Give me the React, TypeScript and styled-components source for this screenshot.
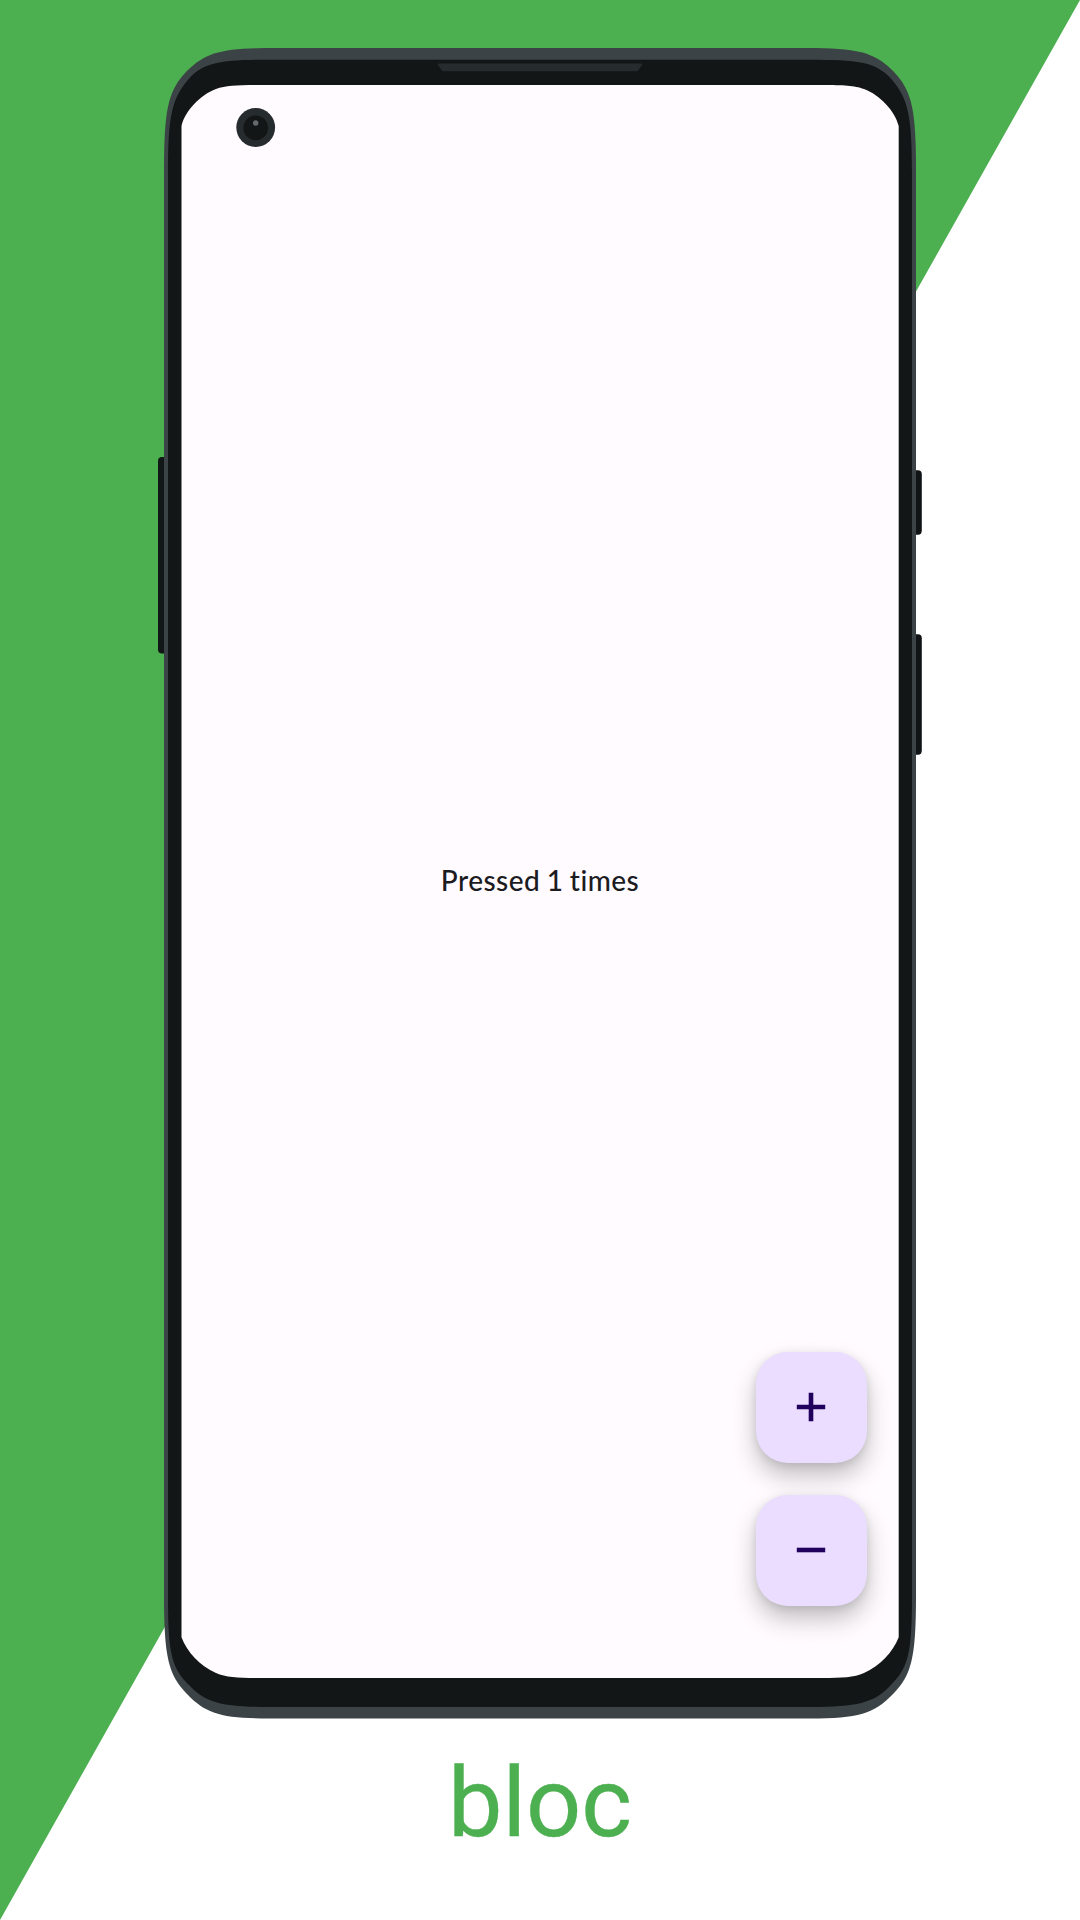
import React, { useState } from "react";
import styled, { createGlobalStyle } from "styled-components";

const GlobalStyle = createGlobalStyle`
  html, body { margin: 0; padding: 0; background: #ffffff; }
`;

const Page = styled.main`
  position: relative;
  isolation: isolate;
  box-sizing: border-box;
  width: 1080px;
  height: 1920px;
  padding-top: 48px;
  display: flex;
  flex-direction: column;
  align-items: center;
  overflow: hidden;
  background: #ffffff;
`;

const Backdrop = styled.div`
  position: absolute;
  inset: 0;
  z-index: -1;
  background: #4caf50;
  clip-path: polygon(0 0, 100% 0, 0 100%);
`;

const Phone = styled.section`
  position: relative;
  box-sizing: border-box;
  width: 764px;
  height: 1670.5px;
  padding: 37px 23.5px 40.5px;
  display: flex;
`;

const PhoneArt = styled.svg`
  position: absolute;
  inset: 0;
  width: 764px;
  height: 1670.5px;
`;

const Screen = styled.div`
  position: relative;
  flex: 1;
  display: grid;
  grid-template-rows: 1fr;
`;

const Message = styled.p`
  grid-area: 1 / 1;
  place-self: center;
  margin: 0 0 3px;
  font: 500 28px/40px Lato, "Noto Sans", sans-serif;
  letter-spacing: 0.45px;
  word-spacing: -1px;
  color: #1c1b1f;
`;

const Actions = styled.div`
  grid-area: 1 / 1;
  place-self: end;
  display: flex;
  flex-direction: column;
  gap: 31.5px;
  padding: 0 31.5px 72px 0;
`;

const Fab = styled.button`
  display: flex;
  align-items: center;
  justify-content: center;
  width: 111.5px;
  height: 111.5px;
  padding: 0;
  border: 0;
  border-radius: 32px;
  background: #eaddff;
  color: #21005d;
  box-shadow: 0 13px 24px rgba(0, 0, 0, 0.24), 0 2px 9px rgba(0, 0, 0, 0.1);
  cursor: pointer;
`;

const Glyph = styled.svg`
  width: 48px;
  height: 48px;
  fill: currentColor;
`;

const Title = styled.h1`
  margin: 28px 0 0;
  font: 400 97px/112px Roboto, sans-serif;
  color: #4caf50;
  -webkit-text-stroke: 0.4px #4caf50;
`;

const framePath =
  "M164 173C164 108 168 90 188 70C206 52 224 48 273 48H807C856 48 874 52 892 70C912 90 916 108 916 173V1595C916 1660 911 1675 893 1694C874 1714 858 1718.5 810 1718.5H270C222 1718.5 206 1714 187 1694C169 1675 164 1660 164 1595Z";
const bodyPath =
  "M168 175C168 113 172 98 190 77.5C205 62 222 59.7 271 59.7H809C858 59.7 875 62 890 77.5C908 98 912 113 912 175V1595C912 1656 908 1668 890 1686C874 1703 857 1707 810 1707H270C223 1707 206 1703 190 1686C172 1668 168 1656 168 1595Z";
const glassPath =
  "M181.5 126C185 111 200 95 216 89C226 85.5 236 85 258 85H822C844 85 854 85.5 864 89C880 95 895 111 898.7 126V1637.3C893 1652 880 1666 864 1673C854 1677.5 842 1678 822 1678H258C238 1678 226 1677.5 216 1673C200 1666 187 1652 181.5 1637.3Z";

function PhoneFrame() {
  return (
    <PhoneArt viewBox="158 48 764 1670.5" aria-hidden="true">
      <path d="M165 457H162Q158 457 158 461V649.5Q158 653.5 162 653.5H165Z" fill="#111616" />
      <path d="M915 470.3H918Q921.8 470.3 921.8 474.5V530.5Q921.8 534.7 918 534.7H915Z" fill="#111416" />
      <path d="M915 634.3H918Q921.8 634.3 921.8 638.5V750.5Q921.8 754.7 918 754.7H915Z" fill="#111416" />
      <path d={framePath} fill="#3c4346" />
      <path d={bodyPath} fill="#121617" />
      <path d="M437.5 64.5L439 63.5H641L642.5 64.5L637.5 71.3H442.5Z" fill="#262b2d" />
      <path d={glassPath} fill="#fffbff" />
      <circle cx="255.7" cy="127.5" r="19.4" fill="#262b2d" />
      <circle cx="255.7" cy="127.9" r="12.3" fill="#121617" />
      <circle cx="255.7" cy="123" r="2.7" fill="#656b6d" />
    </PhoneArt>
  );
}

export default function App() {
  const [count, setCount] = useState(1);
  return (
    <>
      <GlobalStyle />
      <Page>
        <Backdrop />
        <Phone>
          <PhoneFrame />
          <Screen>
            <Message>Pressed {count} times</Message>
            <Actions>
              <Fab aria-label="Increment" onClick={() => setCount(count + 1)}>
                <Glyph viewBox="0 0 24 24">
                  <path d="M19.1 13.15h-5.95v5.95h-2.3v-5.95H4.9v-2.3h5.95V4.9h2.3v5.95h5.95z" />
                </Glyph>
              </Fab>
              <Fab aria-label="Decrement" onClick={() => setCount(count - 1)}>
                <Glyph viewBox="0 0 24 24">
                  <path d="M19.1 13.15H4.9v-2.3h14.2z" />
                </Glyph>
              </Fab>
            </Actions>
          </Screen>
        </Phone>
        <Title>bloc</Title>
      </Page>
    </>
  );
}
